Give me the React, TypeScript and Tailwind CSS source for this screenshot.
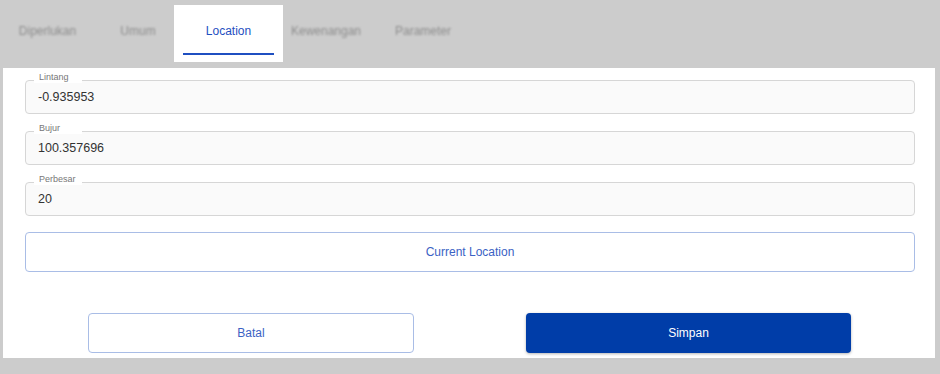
const TABS = [
  { label: 'Diperlukan', width: 'w-[91px]' },
  { label: 'Umum', width: 'w-[90px]' },
  { label: 'Location', width: 'w-[91px]', active: true },
  { label: 'Kewenangan', width: 'w-[104px]' },
  { label: 'Parameter', width: 'w-[90px]' },
];

const FIELDS = [
  { label: 'Lintang', value: '-0.935953' },
  { label: 'Bujur', value: '100.357696' },
  { label: 'Perbesar', value: '20' },
];

function Field({ label, value }: { label: string; value: string }) {
  return (
    <div className="relative h-[34px] rounded-[4px] border border-[#d6d6d6] bg-[#fafafa] flex items-center pl-[12px]">
      <span className="absolute left-[8px] -top-[10px] w-[48px] bg-white px-[5px] text-[9px] leading-[12px] text-[#777]">
        {label}
      </span>
      <span className="text-[12.5px] text-[#333]">{value}</span>
    </div>
  );
}

export default function App() {
  return (
    <div className="w-[940px] h-[374px] bg-[#cccccc] overflow-hidden" style={{ fontFamily: '"Liberation Sans", Arial, sans-serif' }}>
      <div className="flex pt-[7px] pl-[2px]">
        {TABS.map((t) =>
          t.active ? (
            <div key={t.label} className="-mx-[9px] -mt-[2px] -mb-[7px] px-[9px] pt-[2px] pb-[7px] bg-white">
              <div className={`${t.width} h-[48px] flex flex-col`}>
                <div className="flex-1 flex items-center justify-center pt-[2px] text-[12px] text-[#1f4fc1]">{t.label}</div>
                <div className="h-[2px] bg-[#1f4fc1]" />
              </div>
            </div>
          ) : (
            <div key={t.label} className={`${t.width} h-[48px] flex items-center justify-center text-[12px] text-[#8c8c8c] blur-[1px]`}>
              {t.label}
            </div>
          )
        )}
      </div>

      <div className="mt-[13px] ml-[3px] w-[932px] h-[290px] bg-white pt-[12px] pl-[22px] pr-[20px]">
        <div className="flex flex-col gap-[17px]">
          {FIELDS.map((f) => (
            <Field key={f.label} label={f.label} value={f.value} />
          ))}
        </div>
        <button
          type="button"
          className="mt-[16px] w-full h-[40px] rounded-[4px] border border-[#a9bde6] bg-white text-[12px] text-[#3b62c4]"
        >
          Current Location
        </button>
        <div className="mt-[41px] flex pl-[63px] gap-[112px]">
          <button
            type="button"
            className="w-[326px] h-[40px] rounded-[4px] border border-[#a9bde6] bg-white text-[12px] text-[#3b62c4]"
          >
            Batal
          </button>
          <button
            type="button"
            className="w-[325px] h-[40px] rounded-[4px] bg-[#003da8] text-[12px] text-white shadow-[0_1px_3px_rgba(0,0,0,0.3)]"
          >
            Simpan
          </button>
        </div>
      </div>
    </div>
  );
}
